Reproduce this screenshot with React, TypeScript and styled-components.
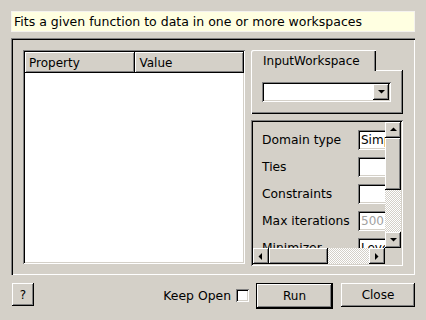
import React from 'react'
import styled, { createGlobalStyle, css } from 'styled-components'

const GlobalStyle = createGlobalStyle`
  html, body {
    margin: 0;
    padding: 0;
    background: #d4d0c8;
  }
  body {
    font-family: 'DejaVu Sans', 'Liberation Sans', sans-serif;
    font-size: 12px;
    color: #000;
  }
`

const raised = css`
  background: #d4d0c8;
  box-shadow: inset -1px -1px #000, inset 1px 1px #fff, inset -2px -2px #808080;
`

const sunken = css`
  box-shadow: inset 1px 1px #808080, inset -1px -1px #fff, inset 2px 2px #000,
    inset -2px -2px #d4d0c8;
`

const checker = css`
  background: repeating-conic-gradient(#fff 0 25%, #d4d0c8 0 50%) 0 0 / 2px 2px;
`

interface IRow {
  label: string
  value: string
  dim?: boolean
}

const rows: IRow[] = [
  { label: 'Domain type', value: 'Simple' },
  { label: 'Ties', value: '' },
  { label: 'Constraints', value: '' },
  { label: 'Max iterations', value: '500', dim: true },
  { label: 'Minimizer', value: 'Levenberg-Marquardt' },
]

function Arrow({ dir }: { dir: 'up' | 'down' | 'left' | 'right' }) {
  const pts = {
    up: '1,5 4.5,1.5 8,5',
    down: '1,2 4.5,5.5 8,2',
    left: '5,1 1.5,4.5 5,8',
    right: '2,1 5.5,4.5 2,8',
  }[dir]
  return (
    <svg width="9" height="9" viewBox="0 0 9 9">
      <polygon points={pts} fill="#000" />
    </svg>
  )
}

export default function App(): JSX.Element {
  return (
    <>
      <GlobalStyle />
      <Style.Dialog>
        <Style.Description>Fits a given function to data in one or more workspaces</Style.Description>
        <Style.MainFrame>
          <Style.Table>
            <Style.Header>
              <Style.HeaderCell $width={112}>Property</Style.HeaderCell>
              <Style.HeaderCell $width={110}>Value</Style.HeaderCell>
            </Style.Header>
          </Style.Table>
          <Style.RightColumn>
            <Style.TabWidget>
              <Style.TabBar>
                <Style.Tab>InputWorkspace</Style.Tab>
                <Style.TabLine />
              </Style.TabBar>
              <Style.TabPane>
                <Style.Combo>
                  <Style.ComboField />
                  <Style.ComboButton>
                    <Arrow dir="down" />
                  </Style.ComboButton>
                </Style.Combo>
              </Style.TabPane>
            </Style.TabWidget>
            <Style.ScrollArea>
              <Style.ScrollInner>
                <Style.Viewport>
                  {rows.map((r) => (
                    <Style.Row key={r.label}>
                      <Style.RowLabel>{r.label}</Style.RowLabel>
                      <Style.RowInput $dim={r.dim}>{r.value}</Style.RowInput>
                    </Style.Row>
                  ))}
                </Style.Viewport>
                <Style.VScroll>
                  <Style.ScrollButton>
                    <Arrow dir="up" />
                  </Style.ScrollButton>
                  <Style.VThumb />
                  <Style.Trough />
                  <Style.ScrollButton>
                    <Arrow dir="down" />
                  </Style.ScrollButton>
                </Style.VScroll>
              </Style.ScrollInner>
              <Style.HScrollRow>
                <Style.HScroll>
                  <Style.ScrollButton>
                    <Arrow dir="left" />
                  </Style.ScrollButton>
                  <Style.HThumb />
                  <Style.Trough />
                  <Style.ScrollButton>
                    <Arrow dir="right" />
                  </Style.ScrollButton>
                </Style.HScroll>
                <Style.Corner />
              </Style.HScrollRow>
            </Style.ScrollArea>
          </Style.RightColumn>
        </Style.MainFrame>
        <Style.Footer>
          <Style.Button $width={22} $height={23}>
            ?
          </Style.Button>
          <Style.Spacer />
          <Style.KeepOpen>
            Keep Open <Style.CheckBox />
          </Style.KeepOpen>
          <Style.DefaultButton>Run</Style.DefaultButton>
          <Style.Button $width={74} $height={24}>
            Close
          </Style.Button>
        </Style.Footer>
      </Style.Dialog>
    </>
  )
}

const Style = {
  Dialog: styled.div`
    width: 426px;
    height: 320px;
    box-sizing: border-box;
    padding: 11px 11px 0 11px;
    display: flex;
    flex-direction: column;
    overflow: hidden;
  `,
  Description: styled.div`
    height: 21px;
    box-sizing: border-box;
    background: #ffffe1;
    border: 1px solid #f4f2ee;
    padding: 0 2px;
    line-height: 19px;
    font-size: 12.5px;
    white-space: nowrap;
  `,
  MainFrame: styled.div`
    margin-top: 6px;
    height: 237px;
    box-sizing: border-box;
    padding: 12px 11px 10px 12px;
    display: flex;
    gap: 6px;
    box-shadow: inset 1px 1px #808080, inset 2px 2px #000, inset -1px -1px #fff,
      inset -2px -2px #d4d0c8;
  `,
  Table: styled.div`
    width: 222px;
    height: 214px;
    box-sizing: border-box;
    background: #fff;
    padding: 2px 1px 1px 2px;
    ${sunken};
  `,
  Header: styled.div`
    display: flex;
    height: 21px;
  `,
  HeaderCell: styled.div<{ $width: number }>`
    width: ${({ $width }) => $width}px;
    box-sizing: border-box;
    padding-left: 4px;
    line-height: 22px;
    ${raised};
  `,
  RightColumn: styled.div`
    width: 152px;
    display: flex;
    flex-direction: column;
    gap: 6px;
  `,
  TabWidget: styled.div`
    display: flex;
    flex-direction: column;
  `,
  TabBar: styled.div`
    display: flex;
    align-items: flex-end;
    height: 21px;
  `,
  Tab: styled.div`
    width: 125px;
    height: 21px;
    box-sizing: border-box;
    padding-left: 12px;
    line-height: 23px;
    border-top-left-radius: 2px;
    box-shadow: inset 1px 1px #fff, inset -1px 0 #000, inset -2px 0 #808080;
  `,
  TabLine: styled.div`
    flex: 1;
    height: 1px;
    background: #fff;
    box-shadow: inset -1px 0 #000;
  `,
  TabPane: styled.div`
    height: 43px;
    box-sizing: border-box;
    padding: 11px 12px 0 11px;
    box-shadow: inset 1px 0 #fff, inset -1px -1px #000, inset -2px -2px #808080;
  `,
  Combo: styled.div`
    display: flex;
    height: 20px;
    box-sizing: border-box;
    padding: 2px;
    background: #fff;
    ${sunken};
  `,
  ComboField: styled.div`
    flex: 1;
  `,
  ComboButton: styled.div`
    width: 16px;
    display: flex;
    align-items: center;
    justify-content: center;
    ${raised};
  `,
  ScrollArea: styled.div`
    height: 146px;
    box-sizing: border-box;
    padding: 2px;
    display: flex;
    flex-direction: column;
    ${sunken};
  `,
  ScrollInner: styled.div`
    flex: 1;
    display: flex;
    min-height: 0;
  `,
  Viewport: styled.div`
    flex: 1;
    overflow: hidden;
    padding: 8px 0 0 9px;
    display: flex;
    flex-direction: column;
    gap: 7px;
  `,
  Row: styled.div`
    display: flex;
    align-items: center;
    height: 20px;
    flex-shrink: 0;
  `,
  RowLabel: styled.div`
    width: 96px;
    flex-shrink: 0;
    white-space: nowrap;
    font-size: 12.3px;
  `,
  RowInput: styled.div<{ $dim?: boolean }>`
    width: 120px;
    flex-shrink: 0;
    height: 20px;
    box-sizing: border-box;
    background: #fff;
    padding: 0 3px;
    line-height: 20px;
    white-space: nowrap;
    color: ${({ $dim }) => ($dim ? '#a0a0a0' : '#000')};
    ${sunken};
  `,
  VScroll: styled.div`
    width: 16px;
    display: flex;
    flex-direction: column;
  `,
  ScrollButton: styled.div`
    width: 16px;
    height: 16px;
    flex-shrink: 0;
    display: flex;
    align-items: center;
    justify-content: center;
    ${raised};
  `,
  VThumb: styled.div`
    height: 52px;
    flex-shrink: 0;
    ${raised};
  `,
  HThumb: styled.div`
    width: 59px;
    flex-shrink: 0;
    ${raised};
  `,
  Trough: styled.div`
    flex: 1;
    ${checker};
  `,
  HScrollRow: styled.div`
    display: flex;
    height: 16px;
  `,
  HScroll: styled.div`
    flex: 1;
    display: flex;
  `,
  Corner: styled.div`
    width: 16px;
    background: #d4d0c8;
  `,
  Footer: styled.div`
    margin-top: 8px;
    padding-left: 1px;
    display: flex;
    align-items: flex-start;
    gap: 8px;
  `,
  Spacer: styled.div`
    flex: 1;
  `,
  KeepOpen: styled.div`
    display: flex;
    align-items: center;
    gap: 5px;
    height: 25px;
    margin-right: -1px;
    font-size: 12.4px;
  `,
  CheckBox: styled.div`
    width: 13px;
    height: 13px;
    box-sizing: border-box;
    background: #fff;
    ${sunken};
  `,
  Button: styled.div<{ $width: number; $height: number }>`
    width: ${({ $width }) => $width}px;
    height: ${({ $height }) => $height}px;
    box-sizing: border-box;
    display: flex;
    align-items: center;
    justify-content: center;
    ${raised};
  `,
  DefaultButton: styled.div`
    width: 77px;
    height: 26px;
    box-sizing: border-box;
    display: flex;
    align-items: center;
    justify-content: center;
    border: 1px solid #000;
    ${raised};
  `,
}
